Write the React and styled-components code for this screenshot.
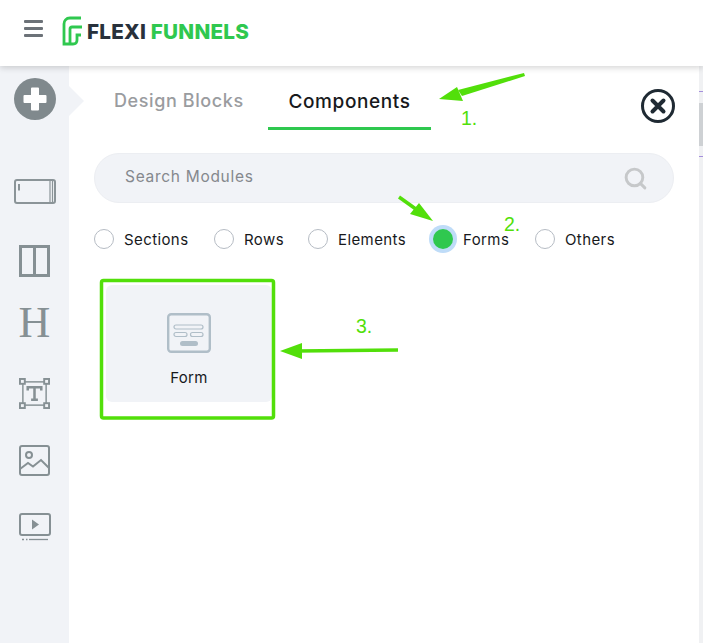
import React from 'react';
import styled, { createGlobalStyle } from 'styled-components';
import { Search } from 'lucide-react';

const GlobalStyle = createGlobalStyle`
  html, body { margin: 0; padding: 0; background: #fff; }
  * { box-sizing: border-box; }
  body { font-family: 'Inter', 'Open Sans', sans-serif; overflow: hidden; }
`;

const groups = [
  { label: 'Sections', width: 120 },
  { label: 'Rows', width: 94 },
  { label: 'Elements', width: 125 },
  { label: 'Forms', width: 102, active: true },
  { label: 'Others', width: 90 },
];

const Logo = () => (
  <LogoWrap>
    <svg width="22" height="30" viewBox="0 0 22 30" fill="none" stroke="#2fc84f" strokeWidth="2.800">
      <path d="M19 2H8C4 2 2 5 2 8V28H11Q15 28 15 24V19H19" />
      <path d="M20 11H10Q8 11 8 13V27" />
    </svg>
    <LogoText>
      FLEXI <b>FUNNELS</b>
    </LogoText>
  </LogoWrap>
);

const SectionIcon = () => (
  <svg width="42" height="25" viewBox="0 0 42 25" fill="none" stroke="#8b9498">
    <rect x="1" y="1" width="40" height="23" rx="2" strokeWidth="2" />
    <path d="M5 5V11.500" strokeWidth="2" />
    <path d="M36 2V23" strokeWidth="1.200" />
    <path d="M38.500 2V23" strokeWidth="1.200" />
  </svg>
);

const RowIcon = () => (
  <svg width="31" height="32" viewBox="0 0 31 32" fill="none" stroke="#869094" strokeWidth="3">
    <rect x="1.500" y="1.500" width="28" height="29" />
    <path d="M15.500 1.500V30.500" />
  </svg>
);

const TextIcon = () => (
  <svg width="31" height="31" viewBox="0 0 32 32" fill="none" stroke="#869094">
    <rect x="4" y="4" width="24" height="24" strokeWidth="1.500" />
    <rect x="1" y="1" width="5" height="5" fill="#f1f3f7" strokeWidth="2" />
    <rect x="26" y="1" width="5" height="5" fill="#f1f3f7" strokeWidth="2" />
    <rect x="1" y="26" width="5" height="5" fill="#f1f3f7" strokeWidth="2" />
    <rect x="26" y="26" width="5" height="5" fill="#f1f3f7" strokeWidth="2" />
    <path d="M9 13V9.500H23V13M16 9.500V22.500M12.500 22.500H19.500" strokeWidth="2.600" />
  </svg>
);

const ImageIcon = () => (
  <svg width="31" height="31" viewBox="0 0 31 31" fill="none" stroke="#869094" strokeWidth="2">
    <rect x="1" y="1" width="29" height="29" rx="2" />
    <circle cx="10" cy="10" r="3" />
    <path d="M1 24L9 18L14 21.500L22 15L30 23" />
  </svg>
);

const VideoIcon = () => (
  <svg width="32" height="29" viewBox="0 0 32 29" fill="none" stroke="#869094" strokeWidth="2">
    <rect x="1" y="1" width="30" height="21" rx="2" />
    <path d="M13 6.500L20 11.500L13 16.500Z" fill="#869094" stroke="none" />
    <path d="M10 26.500H29" strokeWidth="1.300" />
    <path d="M3 26.500H5M7 26.500H8.500" strokeWidth="1.300" />
  </svg>
);

const FormIcon = () => (
  <svg width="44" height="40" viewBox="0 0 44 40" fill="none" stroke="#b0bec8">
    <rect x="1.200" y="1.200" width="41.600" height="37.600" rx="3" strokeWidth="2.400" />
    <rect x="7" y="12" width="29" height="4" rx="2" strokeWidth="1.200" />
    <rect x="7" y="19.500" width="13" height="4" rx="2" strokeWidth="1.200" />
    <rect x="23.500" y="19.500" width="12.500" height="4" rx="2" strokeWidth="1.200" />
    <rect x="13" y="28" width="18" height="5" rx="2.500" fill="#b0bec8" stroke="none" />
  </svg>
);

const App = () => (
  <>
    <GlobalStyle />
    <Page>
      <Header>
        <MenuButton aria-label="Menu">
          <span />
          <span />
          <span />
        </MenuButton>
        <Logo />
      </Header>
      <Body>
        <Sidebar>
          <AddButton>
            <svg width="24" height="24" viewBox="0 0 24 24">
              <path d="M9 1.500H15V9H22.500V15H15V22.500H9V15H1.500V9H9Z" fill="#fff" stroke="#fff" strokeLinejoin="round" strokeWidth="2" />
            </svg>
          </AddButton>
          <SideIcons>
            <SideIcon $h={25} $after={41}><SectionIcon /></SideIcon>
            <SideIcon $h={32} $after={31}><RowIcon /></SideIcon>
            <HeadingGlyph>H</HeadingGlyph>
            <SideIcon $h={31} $after={36}><TextIcon /></SideIcon>
            <SideIcon $h={31} $after={37}><ImageIcon /></SideIcon>
            <SideIcon $h={29} $after={0}><VideoIcon /></SideIcon>
          </SideIcons>
        </Sidebar>
        <Panel>
          <TabRow>
            <Tab>Design Blocks</Tab>
            <Tab $active>Components</Tab>
            <CloseButton>
              <svg width="36" height="36" viewBox="0 0 36 36" fill="none" stroke="#1f2a33">
                <circle cx="18" cy="18" r="15.500" strokeWidth="3" />
                <path d="M12.500 12.500L23.500 23.500M23.500 12.500L12.500 23.500" strokeWidth="4" strokeLinecap="round" />
              </svg>
            </CloseButton>
          </TabRow>
          <SearchBar>
            <SearchText>Search Modules</SearchText>
            <Search size={25} color="#c6c8ca" strokeWidth={2.800} />
          </SearchBar>
          <RadioRow>
            {groups.map((g) => (
              <RadioItem key={g.label} $w={g.width}>
                <RadioDot $active={g.active} />
                {g.label}
              </RadioItem>
            ))}
          </RadioRow>
          <Card>
            <FormIcon />
            <CardLabel>Form</CardLabel>
          </Card>
        </Panel>
        <ScrollRail>
          <RailMark />
          <ScrollThumb />
          <RailMark />
        </ScrollRail>
      </Body>
      <Notes width="703" height="643" viewBox="0 0 703 643" fill="#52df0a" stroke="none">
        <path d="M524 73L525 76L462 96L458 90Z" />
        <path d="M439 99L457 87L463 101Z" />
        <path d="M399 197L420 212" stroke="#52df0a" strokeWidth="3.500" />
        <path d="M433 221L410 214L419 203Z" />
        <path d="M398 350L296 351" stroke="#52df0a" strokeWidth="3.500" />
        <path d="M280 351L302 343V359Z" />
        <rect x="101.500" y="280.500" width="172" height="137.500" rx="2" fill="none" stroke="#52df0a" strokeWidth="3.500" />
      </Notes>
      <NoteText $x={461} $y={107}>1.</NoteText>
      <NoteText $x={504} $y={213}>2.</NoteText>
      <NoteText $x={356} $y={315}>3.</NoteText>
    </Page>
  </>
);

export default App;

const Page = styled.div`
  position: relative;
  width: 703px;
  height: 643px;
  display: flex;
  flex-direction: column;
  overflow: hidden;
`;

const Header = styled.header`
  position: relative;
  z-index: 2;
  flex: 0 0 66px;
  display: flex;
  align-items: flex-start;
  padding: 16px 0 0 24px;
  background: #fff;
  box-shadow: 0 2px 6px rgba(0, 0, 0, 0.16);
`;

const MenuButton = styled.div`
  width: 19px;
  height: 17px;
  margin-top: 4px;
  display: flex;
  flex-direction: column;
  justify-content: space-between;

  > span {
    display: block;
    height: 3px;
    background: #6c7278;
    border-radius: 1px;
  }
`;

const LogoWrap = styled.div`
  display: flex;
  align-items: center;
  gap: 3px;
  margin-left: 19px;
`;

const LogoText = styled.div`
  font-family: 'Inter', sans-serif;
  font-size: 20.700px;
  font-weight: 800;
  letter-spacing: 0.2px;
  color: #28313b;
  white-space: pre;
  padding-top: 1px;

  > b {
    font-weight: 800;
    color: #2fc84f;
  }
`;

const Body = styled.div`
  flex: 1;
  display: flex;
  min-height: 0;
`;

const Sidebar = styled.aside`
  position: relative;
  flex: 0 0 69px;
  display: flex;
  flex-direction: column;
  align-items: center;
  padding: 12px 0 0 0;
  background: #f1f3f7;

  &::after {
    content: '';
    position: absolute;
    top: 20px;
    left: 69px;
    border-top: 15px solid transparent;
    border-bottom: 15px solid transparent;
    border-left: 15px solid #f1f3f7;
  }
`;

const AddButton = styled.div`
  width: 42px;
  height: 42px;
  margin-left: 1px;
  border-radius: 50%;
  background: #80898d;
  display: flex;
  align-items: center;
  justify-content: center;
`;

const SideIcons = styled.div`
  display: flex;
  flex-direction: column;
  align-items: center;
  margin-top: 59px;
`;

const SideIcon = styled.div`
  height: ${(p) => p.$h}px;
  margin-bottom: ${(p) => p.$after}px;
  display: flex;
  align-items: center;
  justify-content: center;
  line-height: 0;
`;

const HeadingGlyph = styled.div`
  font-family: 'Liberation Serif', serif;
  font-size: 44px;
  line-height: 30px;
  height: 30px;
  margin-bottom: 40px;
  color: #869094;
`;

const Panel = styled.main`
  flex: 1;
  padding: 0 25px 0 25px;
  min-width: 0;
`;

const TabRow = styled.div`
  position: relative;
  display: flex;
  height: 64px;
`;

const Tab = styled.div`
  width: ${(p) => (p.$active ? 163 : 174)}px;
  height: 64px;
  padding: 24px 0 0 ${(p) => (p.$active ? 0 : 20)}px;
  font-size: ${(p) => (p.$active ? 19 : 18)}px;
  font-weight: 500;
  letter-spacing: ${(p) => (p.$active ? 0.6 : 0.6)}px;
  text-align: ${(p) => (p.$active ? 'center' : 'left')};
  color: ${(p) => (p.$active ? '#17191c' : '#9a9c9f')};
  border-bottom: 3px solid ${(p) => (p.$active ? '#2fc84f' : 'transparent')};
`;

const CloseButton = styled.div`
  position: absolute;
  top: 22px;
  right: -2px;
  width: 36px;
  height: 36px;
  line-height: 0;
`;

const SearchBar = styled.div`
  height: 50px;
  margin-top: 23px;
  padding: 0 25px 0 30px;
  display: flex;
  align-items: center;
  justify-content: space-between;
  border-radius: 25px;
  background: #f1f3f7;
  border: 1px solid #eceef2;
`;

const SearchText = styled.span`
  font-size: 15.500px;
  letter-spacing: 0.7px;
  line-height: 20px;
  margin-top: -2px;
  color: #85888d;
`;

const RadioRow = styled.div`
  display: flex;
  margin-top: 26px;
  height: 20px;
`;

const RadioItem = styled.label`
  flex: 0 0 ${(p) => p.$w}px;
  display: flex;
  align-items: center;
  gap: 10px;
  font-size: 15px;
  letter-spacing: 0.4px;
  color: #17191c;
`;

const RadioDot = styled.span`
  flex: 0 0 20px;
  height: 20px;
  border-radius: 50%;
  background: ${(p) => (p.$active ? '#2fc84f' : '#fff')};
  border: ${(p) => (p.$active ? 'none' : '1px solid #b6bcc4')};
  box-shadow: ${(p) => (p.$active ? '0 0 0 4px #bfdcf8' : 'none')};
`;

const Card = styled.div`
  width: 166px;
  height: 117px;
  margin: 36px 0 0 12px;
  padding-top: 28px;
  display: flex;
  flex-direction: column;
  align-items: center;
  border-radius: 6px;
  background: #f1f3f7;
`;

const CardLabel = styled.div`
  margin-top: 15px;
  font-size: 15px;
  letter-spacing: 0.3px;
  color: #17191c;
`;

const ScrollRail = styled.div`
  flex: 0 0 4px;
  padding-top: 25px;
  background: #f0f1f3;
`;

const RailMark = styled.div`
  height: 1px;
  background: #a58fdc;
`;

const ScrollThumb = styled.div`
  height: 43px;
  margin: 11px 0 10px;
  background: #ced1d4;
`;

const Notes = styled.svg`
  position: absolute;
  inset: 0;
  z-index: 3;
  pointer-events: none;
`;

const NoteText = styled.span`
  position: absolute;
  left: ${(p) => p.$x}px;
  top: ${(p) => p.$y}px;
  z-index: 3;
  font-family: 'Liberation Sans', sans-serif;
  font-size: 19.500px;
  color: #52df0a;
`;
